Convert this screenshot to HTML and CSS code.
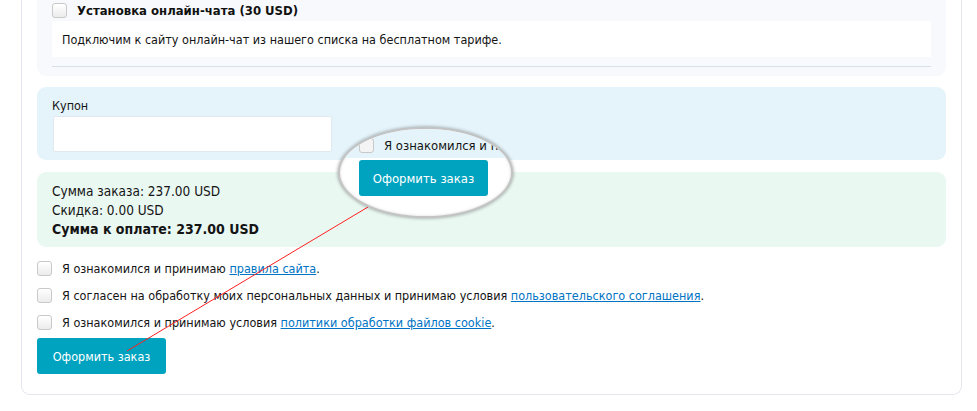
FILE: index.html
```html
<!DOCTYPE html>
<html lang="ru">
<head>
<meta charset="utf-8">
<title>Оформление заказа</title>
<link rel="stylesheet" href="styles.css">
</head>
<body>
<div class="page">
  <div class="card">
    <div class="panel panel-gray">
      <label class="option-title"><span class="cb"></span><span>Установка онлайн-чата (30 USD)</span></label>
      <div class="option-desc">Подключим к сайту онлайн-чат из нашего списка на бесплатном тарифе.</div>
      <div class="divider"></div>
    </div>

    <div class="panel panel-blue">
      <div class="field-label">Купон</div>
      <div class="input"></div>
    </div>

    <div class="panel panel-green">
      <div class="sum-line">Сумма заказа: 237.00 USD</div>
      <div class="sum-line">Скидка: 0.00 USD</div>
      <div class="sum-line sum-total">Сумма к оплате: 237.00 USD</div>
    </div>

    <div class="agreements">
      <label class="agree"><span class="cb"></span><span>Я ознакомился и принимаю <a href="#">правила сайта</a>.</span></label>
      <label class="agree"><span class="cb"></span><span>Я согласен на обработку моих персональных данных и принимаю условия <a href="#">пользовательского соглашения</a>.</span></label>
      <label class="agree"><span class="cb"></span><span>Я ознакомился и принимаю условия <a href="#">политики обработки файлов cookie</a>.</span></label>
    </div>

    <button class="btn">Оформить заказ</button>
  </div>

  <svg class="pointer" width="977" height="411" viewBox="0 0 977 411">
    <line x1="127" y1="351" x2="368" y2="207" stroke="#ff2020" stroke-width="1"/>
  </svg>

  <div class="magnifier">
    <div class="mag-top">
      <span class="cb"></span><span class="mag-text">Я ознакомился и п</span>
    </div>
    <div class="mag-bottom">
      <span class="btn mag-btn">Оформить заказ</span>
    </div>
  </div>
</div>
</body>
</html>
```
FILE: styles.css
```css
* { box-sizing: border-box; }
html, body { margin: 0; padding: 0; background: #fff; }
body {
  font-family: "DejaVu Sans Condensed", "DejaVu Sans", Verdana, sans-serif;
  font-stretch: condensed;
  font-size: 12.5px;
  color: #141414;
  width: 977px;
  height: 411px;
  overflow: hidden;
}
.page { position: relative; width: 977px; height: 411px; padding-left: 21px; }
.card {
  width: 941px;
  border: 1px solid #e3e6ee;
  border-top: none;
  border-radius: 0 0 9px 9px;
  padding: 0 15px 20px 15px;
}
.panel { border-radius: 0 0 9px 9px; padding: 0 15px; }
.panel-gray { background: #f7f9fc; padding-bottom: 9px; }
.panel-blue { background: #e5f4fa; border-radius: 9px; margin-top: 11px; padding-top: 9px; padding-bottom: 8px; }
.panel-green { background: #eaf8f2; border-radius: 9px; margin-top: 12px; padding-top: 10px; padding-bottom: 8px; }

.cb {
  display: inline-block;
  flex: none;
  width: 15px;
  height: 15px;
  border: 1px solid #c9c9c9;
  border-radius: 3px;
  background: linear-gradient(#ffffff, #ececec);
}
.option-title {
  display: flex;
  align-items: center;
  gap: 10px;
  height: 21px;
  font-weight: bold;
  font-size: 13px;
  color: #111;
}
.option-desc {
  background: #fff;
  height: 36px;
  display: flex;
  align-items: center;
  padding-left: 10px;
}
.divider { height: 1px; background: #d6e0eb; margin-top: 9px; }

.field-label { height: 20px; line-height: 19px; }
.input {
  width: 279px;
  height: 36px;
  margin-left: 1px;
  background: #fff;
  border: 1px solid #e0e9ef;
  border-radius: 2px;
}

.sum-line { line-height: 19px; font-size: 13.5px; }
.sum-total { font-weight: bold; font-size: 14px; }

.agreements { padding-top: 8px; }
.agree {
  display: flex;
  align-items: center;
  gap: 10px;
  height: 27px;
}
.agree a { color: #0074c4; text-decoration: underline; }

.btn {
  display: flex;
  align-items: center;
  justify-content: center;
  width: 129px;
  height: 36px;
  margin-top: 2px;
  border: none;
  border-radius: 3px;
  background: #00a3bf;
  color: #fff;
  font-family: inherit;
  font-stretch: condensed;
  font-size: 12.5px;
  padding: 0;
}

.pointer { position: absolute; left: 0; top: 0; pointer-events: none; }

.magnifier {
  position: absolute;
  left: 338px;
  top: 127px;
  width: 175px;
  height: 91px;
  border-radius: 50%;
  overflow: hidden;
  background: #fff;
  border: 2px solid #c4c4c4;
  box-shadow: 0 0 3px 1px rgba(0,0,0,0.25), inset 0 0 3px rgba(0,0,0,0.15);
}
.mag-top {
  height: 29px;
  background: #e5f4fa;
  display: flex;
  align-items: flex-end;
  gap: 10px;
  padding-left: 19px;
  padding-bottom: 5px;
  white-space: nowrap;
  font-size: 13px;
}
.mag-top .cb { background: #f4f4f4; }
.mag-bottom { padding-left: 19px; padding-top: 2px; }
.mag-btn { margin-top: 0; font-size: 13px; }
```
